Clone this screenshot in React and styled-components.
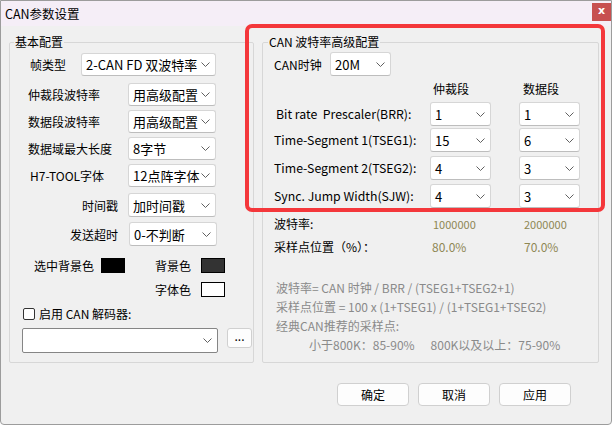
import React from "react";
import styled, { createGlobalStyle } from "styled-components";

const Global = createGlobalStyle`
  html, body { margin: 0; padding: 0; background: #ffffff; }
  body { font-family: "Noto Sans CJK SC", "Noto Sans", sans-serif; font-size: 12px; color: #000; }
  * { box-sizing: border-box; }
`;

const Window = styled.div`
  position: relative;
  width: 612px;
  height: 425px;
  background: #f0f0f0;
  border: 1px solid #9c9c9c;
  border-radius: 0 0 4px 4px;
  display: flex;
  flex-direction: column;
`;

const TitleBar = styled.div`
  height: 25px;
  background: #f5eef7;
  display: flex;
  justify-content: space-between;
  align-items: flex-start;
  padding-left: 4px;
`;

const Title = styled.span`
  font-size: 12.5px;
  line-height: 25px;
`;

const CloseBtn = styled.div`
  margin-top: 2px;
  width: 19px;
  height: 18px;
  background: #c75050;
  color: #fff;
  font-family: "DejaVu Sans", sans-serif;
  font-weight: bold;
  font-size: 11px;
  line-height: 16px;
  text-align: center;
`;

const Body = styled.div`
  flex: 1;
  padding: 8px 0 0 8px;
  display: flex;
  flex-direction: column;
`;

const Groups = styled.div`
  display: flex;
  gap: 8px;
  align-items: flex-start;
`;

const Group = styled.fieldset`
  margin: 0;
  padding: 0;
  width: ${(p) => p.$w}px;
  height: 329px;
  border: 1px solid #d7d7d7;
  border-radius: 2px;
  min-width: 0;
`;

const Legend = styled.legend`
  margin-left: ${(p) => p.$ml}px;
  padding: 0 1px;
  font-size: 12px;
  line-height: 16px;
`;

const Row = styled.div`
  display: flex;
  align-items: center;
  margin-top: ${(p) => p.$mt}px;
  padding-left: ${(p) => p.$pl}px;
`;

const Label = styled.span`
  width: ${(p) => p.$w}px;
  flex: none;
  text-align: ${(p) => (p.$right ? "right" : "left")};
  padding-right: ${(p) => (p.$right ? 10 : 0)}px;
  white-space: nowrap;
`;

const ComboBox = styled.div`
  flex: none;
  width: ${(p) => p.$w}px;
  height: ${(p) => p.$h || 24}px;
  margin-left: ${(p) => p.$ml || 0}px;
  background: #fff;
  border: 1px solid ${(p) => (p.$dark ? "#858585" : "#d6d6d6")};
  border-bottom-color: ${(p) => (p.$dark ? "#858585" : "#bdbdbd")};
  border-radius: ${(p) => (p.$dark ? 2 : 3)}px;
  display: flex;
  align-items: center;
  justify-content: space-between;
  padding: 0 5px 0 4px;
  white-space: nowrap;
  font-size: 13px;
`;

const Chevron = () => (
  <svg width="9" height="5" viewBox="0 0 9 5">
    <polyline points="0.5,0.5 4.5,4.5 8.5,0.5" fill="none" stroke="#606060" strokeWidth="1" />
  </svg>
);

const Combo = ({ value, ...rest }) => (
  <ComboBox {...rest}>
    <span>{value}</span>
    <Chevron />
  </ComboBox>
);

const ColorGrid = styled.div`
  margin-top: 12px;
  padding-left: 24px;
  display: grid;
  grid-template-columns: 60px 24px 60px 24px;
  grid-template-rows: 15px 15px;
  column-gap: 7px;
  row-gap: 9px;
  align-items: center;
`;

const ColorLabel = styled.span`
  text-align: ${(p) => (p.$right ? "right" : "left")};
  grid-column: ${(p) => p.$col};
  grid-row: ${(p) => p.$row};
  white-space: nowrap;
  line-height: 15px;
  padding-right: ${(p) => (p.$right ? 1 : 0)}px;
`;

const Swatch = styled.div`
  grid-column: ${(p) => p.$col};
  grid-row: ${(p) => p.$row};
  width: 24px;
  height: 15px;
  background: ${(p) => p.$c};
  border: 1px solid #000;
  margin-left: ${(p) => p.$ml || 0}px;
`;

const CheckRow = styled.div`
  display: flex;
  align-items: center;
  gap: 4px;
  margin-top: 10px;
  padding-left: 13px;
  height: 13px;
`;

const CheckBox = styled.div`
  width: 12px;
  height: 12px;
  border: 1px solid #333;
  border-radius: 2px;
  background: #fff;
`;

const DecoderRow = styled.div`
  display: flex;
  align-items: flex-start;
  gap: 9px;
  margin-top: 8px;
  padding-left: 12px;
`;

const SmallBtn = styled.div`
  width: 25px;
  height: 20px;
  background: #fdfdfd;
  border: 1px solid #d0d0d0;
  border-radius: 3px;
  text-align: center;
  line-height: 14px;
  font-size: 12px;
`;

const Grid = styled.div`
  display: grid;
  grid-template-columns: 128px 61px 61px;
  column-gap: 28px;
  align-items: center;
  padding-left: 11px;
  margin-top: ${(p) => p.$mt}px;
  height: ${(p) => p.$h}px;
`;

const Cell = styled.span`
  padding-left: ${(p) => p.$pl || 0}px;
  color: ${(p) => p.$c || "#000"};
  white-space: pre;
  font-size: ${(p) => p.$fs || 12}px;
`;

const Note = styled.div`
  display: flex;
  gap: ${(p) => p.$gap || 0}px;
  color: #8a8a8a;
  font-size: 12px;
  line-height: 19px;
  height: 19px;
  padding-left: ${(p) => p.$pl}px;
  margin-top: ${(p) => p.$mt || 0}px;
  white-space: pre;
`;

const ButtonRow = styled.div`
  display: flex;
  justify-content: flex-end;
  gap: 9px;
  margin-top: 20px;
  padding-right: 40px;
`;

const Button = styled.div`
  width: 72px;
  height: 23px;
  background: #fdfdfd;
  border: 1px solid #d0d0d0;
  border-radius: 4px;
  display: flex;
  align-items: center;
  justify-content: center;
  font-size: 12px;
`;

const Highlight = styled.div`
  position: absolute;
  left: 244px;
  top: 23px;
  width: 360px;
  height: 188px;
  border: 4px solid #f4373b;
  border-radius: 7px;
  pointer-events: none;
`;

const rows = [
  { label: "Bit rate  Prescaler(BRR):", a: "1", b: "1", mt: 6, pl: 2 },
  { label: "Time-Segment 1(TSEG1):", a: "15", b: "6", mt: 2, pl: 0 },
  { label: "Time-Segment 2(TSEG2):", a: "4", b: "3", mt: 4, pl: 0 },
  { label: "Sync. Jump Width(SJW):", a: "4", b: "3", mt: 4, pl: 0 },
];

export default function App() {
  return (
    <>
      <Global />
      <Window>
        <TitleBar>
          <Title>CAN参数设置</Title>
          <CloseBtn>x</CloseBtn>
        </TitleBar>
        <Body>
          <Groups>
            <Group $w={245}>
              <Legend $ml={4}>基本配置</Legend>
              <Row $mt={3} $pl={20}>
                <Label $w={51}>帧类型</Label>
                <Combo $w={135} $h={23} value="2-CAN FD 双波特率" />
              </Row>
              <Row $mt={7} $pl={18}>
                <Label $w={100}>仲裁段波特率</Label>
                <Combo $w={88} $h={23} value="用高级配置" />
              </Row>
              <Row $mt={4} $pl={18}>
                <Label $w={100}>数据段波特率</Label>
                <Combo $w={88} $h={23} value="用高级配置" />
              </Row>
              <Row $mt={4} $pl={18}>
                <Label $w={100}>数据域最大长度</Label>
                <Combo $w={88} $h={23} value="8字节" />
              </Row>
              <Row $mt={4} $pl={20}>
                <Label $w={98}>H7-TOOL字体</Label>
                <Combo $w={88} $h={23} value="12点阵字体" />
              </Row>
              <Row $mt={6} $pl={18}>
                <Label $w={100} $right>时间戳</Label>
                <Combo $w={88} value="加时间戳" />
              </Row>
              <Row $mt={5} $pl={18}>
                <Label $w={100} $right>发送超时</Label>
                <Combo $w={88} $ml={1} value="0-不判断" />
              </Row>
              <ColorGrid>
                <ColorLabel $col={1} $row={1}>选中背景色</ColorLabel>
                <Swatch $col={2} $row={1} $c="#000" />
                <ColorLabel $col={3} $row={1} $right>背景色</ColorLabel>
                <Swatch $col={4} $row={1} $c="#333333" $ml={2} />
                <ColorLabel $col={3} $row={2} $right>字体色</ColorLabel>
                <Swatch $col={4} $row={2} $c="#ffffff" $ml={2} />
              </ColorGrid>
              <CheckRow>
                <CheckBox />
                <span>启用 CAN 解码器:</span>
              </CheckRow>
              <DecoderRow>
                <Combo $w={196} $h={25} $dark value="" />
                <SmallBtn>...</SmallBtn>
              </DecoderRow>
            </Group>

            <Group $w={337}>
              <Legend $ml={5}>CAN 波特率高级配置</Legend>
              <Row $mt={2} $pl={11}>
                <Label $w={56}>CAN时钟</Label>
                <Combo $w={61} value="20M" />
              </Row>
              <Grid $mt={4} $h={16}>
                <span />
                <Cell $pl={3}>仲裁段</Cell>
                <Cell $pl={4}>数据段</Cell>
              </Grid>
              {rows.map((r) => (
                <Grid key={r.label} $mt={r.mt} $h={24}>
                  <Cell $pl={r.pl} $fs={12.3}>{r.label}</Cell>
                  <Combo $w={61} value={r.a} />
                  <Combo $w={61} value={r.b} />
                </Grid>
              ))}
              <Grid $mt={7} $h={16}>
                <Cell>波特率:</Cell>
                <Cell $pl={3} $c="#8e8754" $fs={11}>1000000</Cell>
                <Cell $pl={5} $c="#8e8754" $fs={11}>2000000</Cell>
              </Grid>
              <Grid $mt={7} $h={16}>
                <Cell>采样点位置（%）：</Cell>
                <Cell $pl={2} $c="#8e8754">80.0%</Cell>
                <Cell $pl={5} $c="#8e8754">70.0%</Cell>
              </Grid>
              <Note $pl={13} $mt={24}>波特率= CAN 时钟 / BRR / (TSEG1+TSEG2+1)</Note>
              <Note $pl={13}>采样点位置 = 100 x (1+TSEG1) / (1+TSEG1+TSEG2)</Note>
              <Note $pl={13}>经典CAN推荐的采样点:</Note>
              <Note $pl={46} $gap={16}>
                <span>小于800K：85-90%</span>
                <span>800K以及以上：75-90%</span>
              </Note>
            </Group>
          </Groups>
          <ButtonRow>
            <Button>确定</Button>
            <Button>取消</Button>
            <Button>应用</Button>
          </ButtonRow>
        </Body>
        <Highlight />
      </Window>
    </>
  );
}
